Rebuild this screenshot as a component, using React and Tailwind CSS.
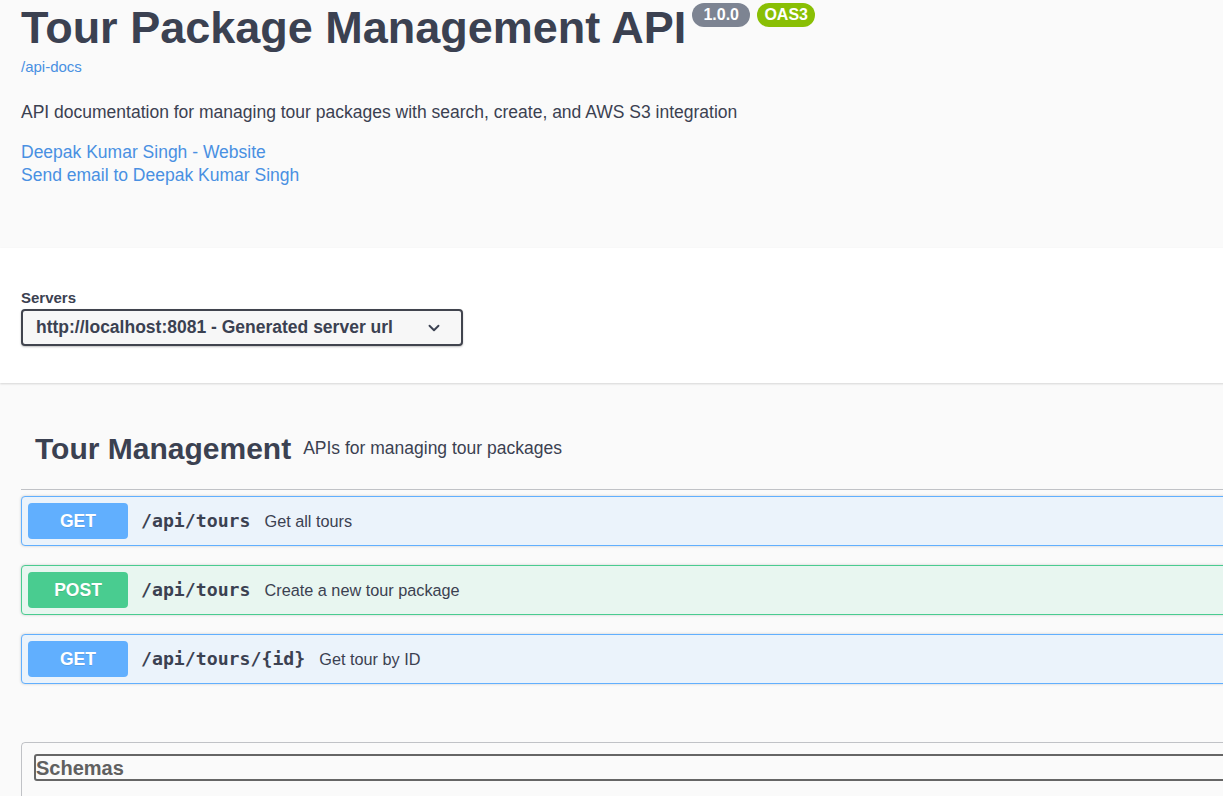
import { ChevronDown } from "lucide-react";

const ops = [
  { method: "GET", path: "/api/tours", desc: "Get all tours" },
  { method: "POST", path: "/api/tours", desc: "Create a new tour package" },
  { method: "GET", path: "/api/tours/{id}", desc: "Get tour by ID" },
];

function OpBlock({ method, path, desc }) {
  const isPost = method === "POST";
  return (
    <div
      className={
        "mb-[19px] flex h-[50px] items-center rounded-[4px] border px-[6px] shadow-[0_0_3px_rgba(0,0,0,0.19)] " +
        (isPost ? "border-[#49cc90] bg-[#e8f6f0]" : "border-[#61affe] bg-[#ebf3fb]")
      }
    >
      <span
        className={
          "flex h-[36px] w-[100px] items-center justify-center rounded-[4px] text-[17.5px] font-bold text-white [text-shadow:0_1px_0_rgba(0,0,0,0.1)] " +
          (isPost ? "bg-[#49cc90]" : "bg-[#61affe]")
        }
      >
        {method}
      </span>
      <span className="pl-[13px] pr-[14px] font-['DejaVu_Sans_Mono',monospace] text-[18.2px] font-bold text-[#3b4151]">
        {path}
      </span>
      <span className="text-[16.25px] text-[#3b4151]">{desc}</span>
    </div>
  );
}

export default function App() {
  return (
    <div className="h-[796px] w-[1223px] overflow-hidden bg-[#fafafa] font-['Liberation_Sans',Arial,sans-serif] text-[#3b4151]">
      <div className="w-[1400px]">
        {/* info */}
        <section className="px-[21px] pt-[2px]">
          <div className="flex items-start">
            <h2 className="text-[45px] font-bold leading-[52px]">Tour Package Management API</h2>
            <span className="ml-[6px] mt-[1px] flex h-[24px] w-[58px] items-center justify-center rounded-full bg-[#7d8492] text-[16px] font-bold text-white">
              1.0.0
            </span>
            <span className="ml-[7px] mt-[1px] flex h-[24px] w-[58px] items-center justify-center rounded-full bg-[#89bf04] text-[16px] font-bold text-white">
              OAS3
            </span>
          </div>
          <div className="mt-[4px] text-[15px] leading-[18px] text-[#4990e2]">/api-docs</div>
          <p className="mt-[25px] text-[17.5px] leading-[22px]">
            API documentation for managing tour packages with search, create, and AWS S3 integration
          </p>
          <div className="mt-[18px] flex flex-col text-[17.5px] leading-[23px] text-[#4990e2]">
            <span>Deepak Kumar Singh - Website</span>
            <span>Send email to Deepak Kumar Singh</span>
          </div>
        </section>

        {/* servers */}
        <section className="mt-[61px] h-[135px] bg-white px-[21px] pt-[42px] shadow-[0_1px_2px_0_rgba(0,0,0,0.15)]">
          <div className="text-[15px] font-bold leading-[16px]">Servers</div>
          <div className="mt-[3px] flex h-[37px] w-[442px] items-center justify-between rounded-[4px] border-2 border-[#41444e] bg-[#f7f7f7] pl-[13px] pr-[18px] shadow-[0_1px_2px_0_rgba(0,0,0,0.25)]">
            <span className="text-[17.5px] font-bold">http://localhost:8081 - Generated server url</span>
            <ChevronDown size={18} strokeWidth={2.5} className="text-[#3b4151]" />
          </div>
        </section>

        {/* tag */}
        <section className="px-[21px] pt-[45px]">
          <div className="flex h-[62px] items-center border-b border-[rgba(59,65,81,0.3)] pl-[14px] pb-[21px]">
            <h3 className="text-[30px] font-bold">Tour Management</h3>
            <span className="pl-[12px] text-[17.5px]">APIs for managing tour packages</span>
          </div>
          <div className="pt-[6px]">
            {ops.map((op, i) => (
              <OpBlock key={i} {...op} />
            ))}
          </div>
        </section>

        {/* schemas */}
        <section className="mx-[21px] mt-[58px] h-[80px] rounded-[4px] border border-[rgba(59,65,81,0.3)] px-[12px] pt-[11px]">
          <h4 className="flex h-[27px] items-center rounded-[3px] border-2 border-[#666] text-[20px] font-bold text-[#606060]">
            Schemas
          </h4>
        </section>
      </div>
    </div>
  );
}
